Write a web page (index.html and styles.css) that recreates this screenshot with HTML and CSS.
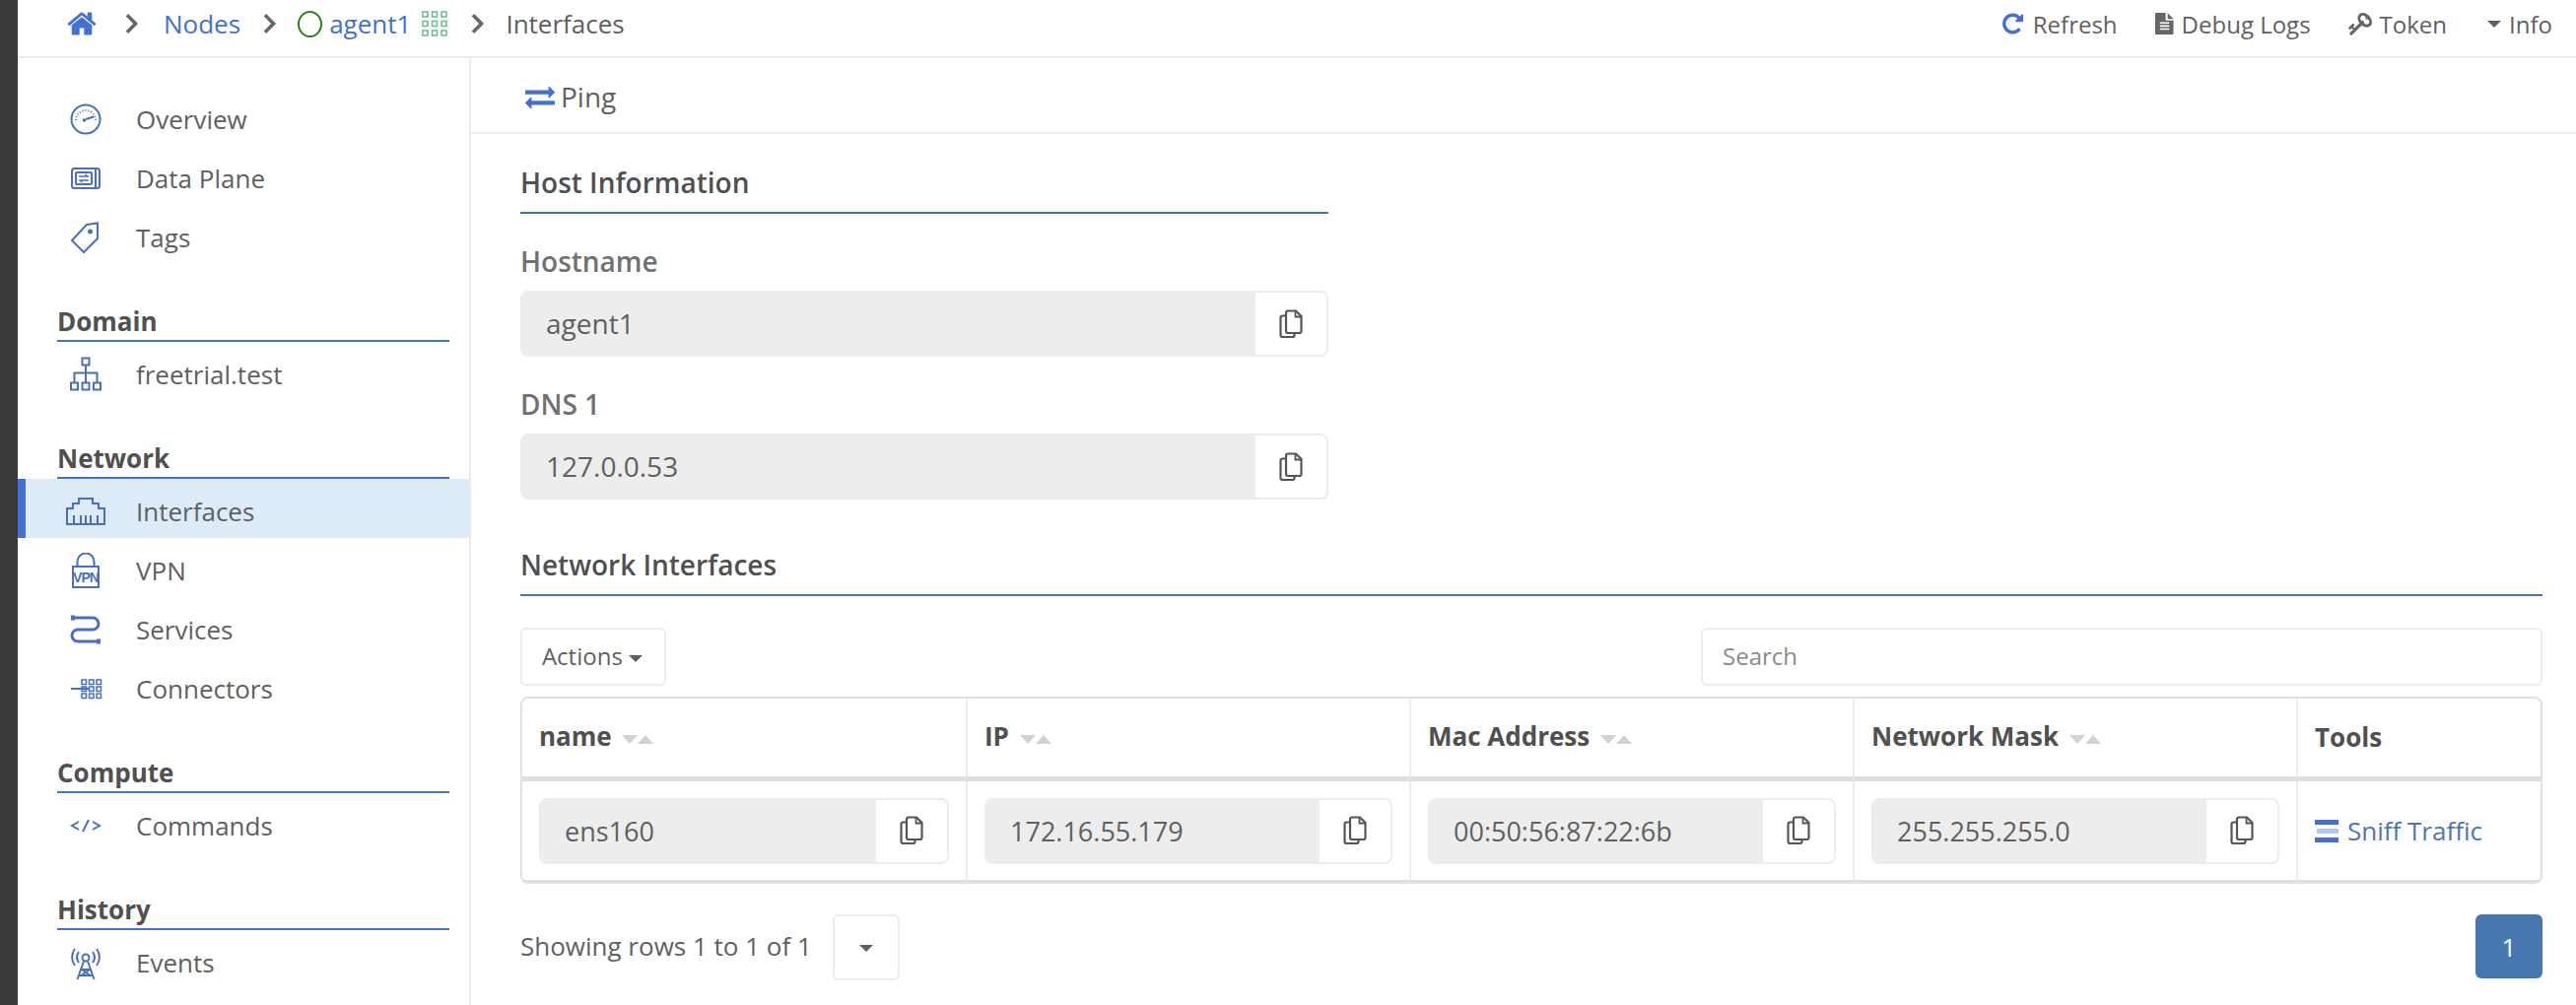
FILE: index.html
```html
<!DOCTYPE html>
<html lang="en">
    <head>
        <meta charset="UTF-8">
        <title>Interfaces</title>
        <link rel="stylesheet" href="styles.css">
    </head>
    <body>
        <svg class="defs" width="0" height="0">
            <symbol id="copy" viewBox="0 0 24 30">
                <path d="M7 6V3.500a2 2 0 0 1 2-2h8l5.500 5.500v15a2 2 0 0 1-2 2H9a2 2 0 0 1-2-2z" fill="none" stroke="currentColor" stroke-width="2.200"/>
                <path d="M16.500 2v5.500h5.500" fill="none" stroke="currentColor" stroke-width="1.800"/>
                <path d="M7 6.500H3.500a2 2 0 0 0-2 2V26a2 2 0 0 0 2 2h10a2 2 0 0 0 2-2v-2.500" fill="none" stroke="currentColor" stroke-width="2.200"/>
            </symbol>
            <symbol id="chevron" viewBox="0 0 16 24">
                <path d="M3 2.500l9.500 9.500L3 21.500" fill="none" stroke="currentColor" stroke-width="3.800"/>
            </symbol>
            <symbol id="grid" viewBox="0 0 26 26">
                <g fill="none" stroke="currentColor" stroke-width="1.500">
                    <rect x="1" y="1" width="5" height="5"/><rect x="10.500" y="1" width="5" height="5"/><rect x="20" y="1" width="5" height="5"/>
                    <rect x="1" y="10.500" width="5" height="5"/><rect x="10.500" y="10.500" width="5" height="5"/><rect x="20" y="10.500" width="5" height="5"/>
                    <rect x="1" y="20" width="5" height="5"/><rect x="10.500" y="20" width="5" height="5"/><rect x="20" y="20" width="5" height="5"/>
                </g>
            </symbol>
        </svg>

        <div class="strip"></div>
        <div class="page">
            <header class="topbar">
                <nav class="crumbs">
                    <a class="crumb-home"><svg class="ico-home" viewBox="0 0 1792 1792"><path fill="currentColor" d="M1472 992v480q0 26-19 45t-45 19h-384v-384h-256v384h-384q-26 0-45-19t-19-45v-480q0-1 .5-3t.5-3l575-474 575 474q1 2 1 6zm223-69l-62 74q-8 9-21 11h-3q-13 0-21-7l-692-577-692 577q-12 8-24 7-13-2-21-11l-62-74q-8-10-7-23.500t11-21.500l719-599q32-26 76-26t76 26l244 204v-195q0-14 9-23t23-9h192q14 0 23 9t9 23v408l219 182q10 8 11 21.500t-7 23.500z"/></svg></a>
                    <svg class="sep sep-first"><use href="#chevron"/></svg>
                    <a class="crumb-link">Nodes</a>
                    <svg class="sep sep-second"><use href="#chevron"/></svg>
                    <span class="status-ring"></span>
                    <a class="crumb-link">agent1</a>
                    <svg class="agent-grid"><use href="#grid"/></svg>
                    <svg class="sep sep-third"><use href="#chevron"/></svg>
                    <span class="crumb-current">Interfaces</span>
                </nav>
                <div class="top-actions">
                    <a class="top-action"><svg class="ico-refresh" viewBox="128 128 1536 1536"><path fill="currentColor" d="M1664 256v448q0 26-19 45t-45 19h-448q-42 0-59-40-17-39 14-69l138-138q-148-137-349-137-104 0-198.500 40.500t-163.500 109.500-109.500 163.500-40.500 198.500 40.500 198.500 109.500 163.500 163.500 109.500 198.500 40.500q119 0 225-52t179-147q7-10 23-12 15 0 25 9l137 138q9 8 9.500 20.500t-7.500 22.500q-109 132-264 204.500t-327 72.500q-156 0-298-61t-245-164-164-245-61-298 61-298 164-245 245-164 298-61q147 0 284.500 55.500t244.500 156.500l130-129q29-31 70-14 39 17 39 59z"/></svg>Refresh</a>
                    <a class="top-action"><svg class="ico-file" viewBox="128 0 1536 1792"><path fill="currentColor" d="M1596 476q14 14 28 36h-472v-472q22 14 36 28zm-476 164h504v1056q0 40-28 68t-68 28h-1344q-40 0-68-28t-28-68v-1600q0-40 28-68t68-28h800v544q0 40 28 68t68 28zm160 736v-64q0-14-9-23t-23-9h-704q-14 0-23 9t-9 23v64q0 14 9 23t23 9h704q14 0 23-9t9-23zm0-256v-64q0-14-9-23t-23-9h-704q-14 0-23 9t-9 23v64q0 14 9 23t23 9h704q14 0 23-9t9-23zm0-256v-64q0-14-9-23t-23-9h-704q-14 0-23 9t-9 23v64q0 14 9 23t23 9h704q14 0 23-9t9-23z"/></svg>Debug Logs</a>
                    <a class="top-action"><svg class="ico-key" viewBox="0 128 1683 1536"><path fill="currentColor" d="M832 512q0-80-56-136t-136-56-136 56-56 136q0 42 19 83-41-19-83-19-80 0-136 56t-56 136 56 136 136 56 136-56 56-136q0-42-19-83 41 19 83 19 80 0 136-56t56-136zm851 704q0 17-49 66t-66 49q-9 0-28.500-16t-36.500-33-38.500-40-24.500-26l-96 96 220 220q28 28 28 68 0 42-39 81t-81 39q-40 0-68-28l-671-671q-176 131-365 131-163 0-265.500-102.500t-102.500-265.500q0-160 95-313t248-248 313-95q163 0 265.500 102.500t102.500 265.500q0 189-131 365l355 355 96-96q-3-3-26-24.500t-40-38.500-33-36.500-16-28.500q0-17 49-66t66-49q13 0 23 10 6 6 46 44.500t82 79.500 86.500 86 73 78 28.500 41z"/></svg>Token</a>
                    <a class="top-action top-action-info"><span class="caret"></span>Info</a>
                </div>
            </header>

            <div class="main">
                <aside class="sidebar">
                    <ul class="side-group">
                        <li class="side-item">
                            <svg class="side-ico" viewBox="0 0 36 36"><circle cx="18" cy="18" r="14.500"/><path d="M18 18l8-2.500"/><circle class="solid" cx="16.500" cy="19" r="1.800"/><path class="dots" d="M8 19a10 10 0 0 1 20 0"/></svg>
                            <span>Overview</span>
                        </li>
                        <li class="side-item">
                            <svg class="side-ico" viewBox="0 0 36 36"><rect x="4" y="8" width="28" height="20" rx="2.500"/><path d="M28 8v20"/><rect x="8" y="12" width="16" height="12" rx="1"/><path class="thin" d="M11 16h9l-2.500-2M21 20h-9l2.500 2"/></svg>
                            <span>Data Plane</span>
                        </li>
                        <li class="side-item">
                            <svg class="side-ico" viewBox="0 0 36 36"><path d="M4 21L19 5l11-1.500V19L16 33z"/><circle class="solid" cx="22.500" cy="12" r="2.500"/></svg>
                            <span>Tags</span>
                        </li>
                    </ul>

                    <h3 class="side-title">Domain</h3>
                    <ul class="side-group">
                        <li class="side-item">
                            <svg class="side-ico" viewBox="0 0 36 36"><rect x="14.500" y="1.500" width="7" height="7"/><rect x="3" y="26.500" width="7" height="7"/><rect x="14.500" y="26.500" width="7" height="7"/><rect x="26" y="26.500" width="7" height="7"/><path d="M18 8.500v18M6.500 26.500v-10h23v10"/></svg>
                            <span>freetrial.test</span>
                        </li>
                    </ul>

                    <h3 class="side-title">Network</h3>
                    <ul class="side-group">
                        <li class="side-item active">
                            <svg class="side-ico wide" viewBox="0 0 40 30"><path d="M1 28V12h6V7h6V2h14v5h6v5h6v16z"/><path d="M8 28v-9M15 28v-9M20 28v-9M25 28v-9M32 28v-9"/></svg>
                            <span>Interfaces</span>
                        </li>
                        <li class="side-item">
                            <svg class="side-ico" viewBox="0 0 36 36"><path d="M9.500 14V9a8.500 8.500 0 0 1 17 0v5"/><rect x="5" y="14" width="26" height="21"/><text class="vpn-text" x="18" y="30">VPN</text></svg>
                            <span>VPN</span>
                        </li>
                        <li class="side-item">
                            <svg class="side-ico" viewBox="0 0 36 36"><path class="thick" d="M5 6h20a6 6 0 0 1 0 12H10a6 6 0 0 0 0 12h20"/><path class="thick-end" d="M3 6h4M29 30h4"/></svg>
                            <span>Services</span>
                        </li>
                        <li class="side-item">
                            <svg class="side-ico" viewBox="0 0 36 36"><path d="M3 18h18"/><g class="thin"><rect x="14" y="9" width="4.500" height="4.500"/><rect x="21.500" y="9" width="4.500" height="4.500"/><rect x="29" y="9" width="4.500" height="4.500"/><rect x="14" y="16" width="4.500" height="4.500"/><rect x="21.500" y="16" width="4.500" height="4.500"/><rect x="29" y="16" width="4.500" height="4.500"/><rect x="14" y="23" width="4.500" height="4.500"/><rect x="21.500" y="23" width="4.500" height="4.500"/><rect x="29" y="23" width="4.500" height="4.500"/></g></svg>
                            <span>Connectors</span>
                        </li>
                    </ul>

                    <h3 class="side-title">Compute</h3>
                    <ul class="side-group">
                        <li class="side-item">
                            <svg class="side-ico" viewBox="0 0 36 36"><path d="M11 14l-7 4 7 4M25 14l7 4-7 4M21 12l-6 12"/></svg>
                            <span>Commands</span>
                        </li>
                    </ul>

                    <h3 class="side-title">History</h3>
                    <ul class="side-group">
                        <li class="side-item">
                            <svg class="side-ico" viewBox="0 0 36 36"><circle cx="18" cy="13" r="3.500"/><path d="M16 16.500L9.500 35M20 16.500L26.500 35M14 25h8M11.500 31h13M14 25l8.500 6M22 25l-8.500 6"/><path d="M11 18a9.500 9.500 0 0 1 0-11M25 18a9.500 9.500 0 0 0 0-11M7 21a14 14 0 0 1 0-17M29 21a14 14 0 0 0 0-17"/></svg>
                            <span>Events</span>
                        </li>
                    </ul>
                </aside>

                <main class="content">
                    <div class="toolbar">
                        <a class="ping"><svg class="ico-ping" viewBox="0 0 1792 1792"><path fill="currentColor" d="M1792 1184v192q0 13-9.500 22.500t-22.500 9.500h-1376v192q0 13-9.500 22.500t-22.500 9.500q-12 0-24-10l-319-320q-9-9-9-22 0-14 9-23l320-320q9-9 23-9 13 0 22.500 9.500t9.500 22.500v192h1376q13 0 22.500 9.500t9.500 22.500zm0-544q0 14-9 23l-320 320q-9 9-23 9-13 0-22.500-9.500t-9.500-22.500v-192h-1376q-13 0-22.500-9.500t-9.500-22.500v-192q0-13 9.500-22.500t22.500-9.500h1376v-192q0-14 9-23t23-9q12 0 24 10l319 319q9 9 9 23z"/></svg>Ping</a>
                    </div>

                    <div class="panel">
                        <section class="host-info">
                            <h2 class="section-title">Host Information</h2>
                            <label class="field-label">Hostname</label>
                            <div class="copy-field">
                                <span class="copy-value">agent1</span>
                                <button class="copy-btn"><svg class="ico-copy"><use href="#copy"/></svg></button>
                            </div>
                            <label class="field-label">DNS 1</label>
                            <div class="copy-field">
                                <span class="copy-value">127.0.0.53</span>
                                <button class="copy-btn"><svg class="ico-copy"><use href="#copy"/></svg></button>
                            </div>
                        </section>

                        <section>
                            <h2 class="section-title section-title-net">Network Interfaces</h2>
                            <div class="table-tools">
                                <button class="actions-btn">Actions <span class="caret"></span></button>
                                <div class="search">Search</div>
                            </div>
                            <table class="net-table">
                                <thead>
                                    <tr>
                                        <th class="col-name">name <span class="sort"><i class="down"></i><i class="up"></i></span></th>
                                        <th class="col-ip">IP <span class="sort"><i class="down"></i><i class="up"></i></span></th>
                                        <th class="col-mac">Mac Address <span class="sort"><i class="down"></i><i class="up"></i></span></th>
                                        <th class="col-mask">Network Mask <span class="sort"><i class="down"></i><i class="up"></i></span></th>
                                        <th class="col-tools">Tools</th>
                                    </tr>
                                </thead>
                                <tbody>
                                    <tr>
                                        <td><div class="copy-field"><span class="copy-value">ens160</span><button class="copy-btn"><svg class="ico-copy"><use href="#copy"/></svg></button></div></td>
                                        <td><div class="copy-field"><span class="copy-value">172.16.55.179</span><button class="copy-btn"><svg class="ico-copy"><use href="#copy"/></svg></button></div></td>
                                        <td><div class="copy-field"><span class="copy-value">00:50:56:87:22:6b</span><button class="copy-btn"><svg class="ico-copy"><use href="#copy"/></svg></button></div></td>
                                        <td><div class="copy-field"><span class="copy-value">255.255.255.0</span><button class="copy-btn"><svg class="ico-copy"><use href="#copy"/></svg></button></div></td>
                                        <td><a class="sniff"><svg class="ico-sniff" viewBox="0 0 24 24"><rect x="0" y="1" width="24" height="5" fill="#4470d4"/><rect x="2" y="10" width="22" height="5" fill="#b4c6ee"/><rect x="0" y="19" width="24" height="5" fill="#4470d4"/></svg>Sniff Traffic</a></td>
                                    </tr>
                                </tbody>
                            </table>
                            <div class="pager">
                                <div class="pager-info">
                                    <span class="pager-text">Showing rows 1 to 1 of 1</span>
                                    <button class="size-btn"><span class="caret"></span></button>
                                </div>
                                <button class="page-btn">1</button>
                            </div>
                        </section>
                    </div>
                </main>
            </div>
        </div>
    </body>
</html>
```

FILE: styles.css
```css
/* Global */
html, body {
    margin: 0;
    height: 1020px;
    overflow: hidden;
}

body {
    display: flex;
    font-family: "Open Sans", "Noto Sans", sans-serif;
    font-size: 26px;
    color: #5f6062;
    background: #fff;
}

.defs {
    position: absolute;
}

.strip {
    width: 18px;
    flex: none;
    background: #3a3a3a;
}

.page {
    flex: 1;
    min-width: 0;
    display: flex;
    flex-direction: column;
}

/* Top bar */
.topbar {
    height: 59px;
    flex: none;
    box-sizing: border-box;
    display: flex;
    justify-content: space-between;
    align-items: center;
    padding-bottom: 9px;
    border-bottom: 2px solid #ececec;
}

.crumbs {
    display: flex;
    align-items: center;
    padding-left: 49px;
}

.crumb-home {
    display: flex;
}

.ico-home {
    width: 32px;
    height: 32px;
    color: #4470d4;
}

.sep {
    width: 15px;
    height: 22px;
    color: #666;
}

.sep-first {
    margin: 0 25px 0 27px;
}

.sep-second {
    margin: 0 21px 0 22px;
}

.sep-third {
    margin: 0 21px 0 23px;
}

.crumb-link {
    color: #4470d4;
}

.status-ring {
    width: 21px;
    height: 23px;
    border: 2px solid #2e7d1e;
    border-radius: 50%;
    margin-right: 7px;
}

.agent-grid {
    width: 26px;
    height: 26px;
    margin-left: 11px;
    color: #6cba8e;
}

.top-actions {
    display: flex;
    align-items: center;
    gap: 38px;
    padding-right: 24px;
    font-size: 24px;
}

.top-action {
    display: flex;
    align-items: center;
    gap: 8px;
}

.top-action-info {
    margin-left: 3px;
}

.ico-refresh {
    width: 21px;
    height: 22px;
    margin-right: 2px;
    color: #4470d4;
}

.ico-file {
    width: 19px;
    height: 24px;
    color: #666;
}

.ico-key {
    width: 24px;
    height: 24px;
    color: #666;
    transform: scaleX(-1);
}

.caret {
    display: inline-block;
    width: 0;
    height: 0;
    border-left: 7px solid transparent;
    border-right: 7px solid transparent;
    border-top: 7px solid #5f6062;
    vertical-align: middle;
}

/* Layout under the top bar */
.main {
    flex: 1;
    display: flex;
    min-height: 0;
}

/* Sidebar */
.sidebar {
    width: 458px;
    flex: none;
    border-right: 2px solid #ececec;
    padding-top: 29px;
}

.side-group {
    list-style: none;
    margin: 0;
    padding: 0;
}

.side-item {
    height: 60px;
    display: flex;
    align-items: center;
    padding: 6px 0 0 51px;
    box-sizing: border-box;
}

.side-item span {
    margin-left: 33px;
}

.side-item.active {
    background: #ddebf7;
    border-left: 8px solid #4470d4;
    padding-left: 43px;
}

.side-ico {
    width: 36px;
    height: 36px;
    flex: none;
    fill: none;
    stroke: #4a6fc0;
    stroke-width: 2;
}

.side-ico.wide {
    width: 40px;
    margin-left: -2px;
    margin-right: -2px;
}

.side-ico .solid {
    fill: #4a6fc0;
    stroke: none;
}

.side-ico .dots {
    stroke-width: 2;
    stroke-dasharray: 1 2;
}

.side-ico .thin {
    stroke-width: 1.500;
}

.side-ico .thick {
    stroke-width: 3;
}

.side-ico .thick-end {
    stroke-width: 5;
}

.vpn-text {
    font-family: "Liberation Sans", sans-serif;
    font-size: 14px;
    font-weight: bold;
    letter-spacing: -1px;
    text-anchor: middle;
    fill: #4a6fc0;
    stroke: none;
}

.side-title {
    margin: 44px 20px 0 40px;
    height: 28px;
    padding-bottom: 5px;
    border-bottom: 2px solid #4470d4;
    font-size: 26px;
    line-height: 28px;
    font-weight: 700;
    color: #505050;
}

/* Content */
.content {
    flex: 1;
    min-width: 0;
}

.toolbar {
    height: 77px;
    display: flex;
    align-items: center;
    padding: 3px 0 0 55px;
    box-sizing: border-box;
    border-bottom: 2px solid #ececec;
}

.ping {
    display: flex;
    align-items: center;
    gap: 6px;
    font-size: 28px;
}

.ico-ping {
    width: 30px;
    height: 30px;
    color: #4470d4;
}

.panel {
    padding: 30px 34px 0 50px;
}

.host-info {
    width: 820px;
}

.section-title {
    margin: 0;
    height: 51px;
    line-height: 38px;
    box-sizing: border-box;
    border-bottom: 2px solid #4470d4;
    font-size: 28px;
    font-weight: 600;
    color: #505050;
}

.section-title-net {
    margin-top: 47px;
}

.field-label {
    display: block;
    margin: 31px 0 13px;
    line-height: 34px;
    font-size: 28px;
    font-weight: 600;
    color: #717171;
}

.copy-field {
    display: flex;
    height: 67px;
    box-sizing: border-box;
    border: 2px solid #ececec;
    border-radius: 8px;
    overflow: hidden;
}

.copy-value {
    flex: 1;
    min-width: 0;
    display: flex;
    align-items: center;
    padding-left: 24px;
    background: #ededed;
    font-size: 27px;
}

.host-info .copy-value {
    padding-bottom: 2px;
    font-size: 28px;
}

.copy-btn {
    width: 72px;
    flex: none;
    border: none;
    background: #fff;
    padding: 0;
    color: #555;
}

.ico-copy {
    width: 24px;
    height: 30px;
    vertical-align: middle;
}

/* Table tools */
.table-tools {
    display: flex;
    justify-content: space-between;
    margin-top: 32px;
}

.actions-btn {
    width: 148px;
    height: 59px;
    border: 2px solid #ececec;
    border-radius: 6px;
    background: #fff;
    font-family: inherit;
    font-size: 24px;
    color: #5f6062;
    padding: 0 2px 2px 0;
}

.search {
    width: 854px;
    height: 59px;
    box-sizing: border-box;
    display: flex;
    align-items: center;
    padding: 0 0 2px 20px;
    border: 2px solid #ececec;
    border-radius: 6px;
    font-size: 24px;
    color: #8b8b8b;
}

/* Table */
.net-table {
    width: 100%;
    margin-top: 11px;
    table-layout: fixed;
    border-collapse: separate;
    border-spacing: 0;
    border: 2px solid #e2e2e2;
    border-radius: 8px;
}

.col-name,
.col-ip,
.col-mac,
.col-mask {
    width: 450px;
}

.net-table th {
    height: 84px;
    box-sizing: border-box;
    padding: 0 0 6px 17px;
    text-align: left;
    font-weight: 700;
    font-size: 26px;
    color: #505050;
    border-bottom: 5px solid #dedede;
    border-left: 2px solid #ececec;
}

.net-table th.col-tools {
    padding-bottom: 2px;
}

.net-table td {
    height: 102px;
    box-sizing: border-box;
    padding: 0 17px;
    border-left: 2px solid #ececec;
    border-bottom: 2px solid #dedede;
}

.net-table th:first-child,
.net-table td:first-child {
    border-left: none;
}

.sort {
    display: inline-block;
    margin-left: 4px;
    vertical-align: 2px;
}

.sort i {
    display: inline-block;
    width: 0;
    height: 0;
    border-left: 8px solid transparent;
    border-right: 8px solid transparent;
}

.sort .down {
    border-top: 9px solid #d2d2d2;
}

.sort .up {
    border-bottom: 9px solid #d2d2d2;
}

.sniff {
    display: flex;
    align-items: center;
    gap: 9px;
    color: #4a77b4;
}

.ico-sniff {
    width: 24px;
    height: 24px;
}

/* Pager */
.pager {
    display: flex;
    justify-content: space-between;
    align-items: flex-start;
    margin-top: 31px;
}

.pager-info {
    display: flex;
    align-items: center;
    gap: 21px;
}

.pager-text {
    padding-bottom: 4px;
}

.size-btn {
    width: 68px;
    height: 67px;
    border: 2px solid #ececec;
    border-radius: 6px;
    background: #fff;
    padding: 0;
}

.page-btn {
    width: 68px;
    height: 65px;
    border: none;
    border-radius: 6px;
    background: #4677b0;
    color: #fff;
    font-family: inherit;
    font-size: 26px;
}
```
